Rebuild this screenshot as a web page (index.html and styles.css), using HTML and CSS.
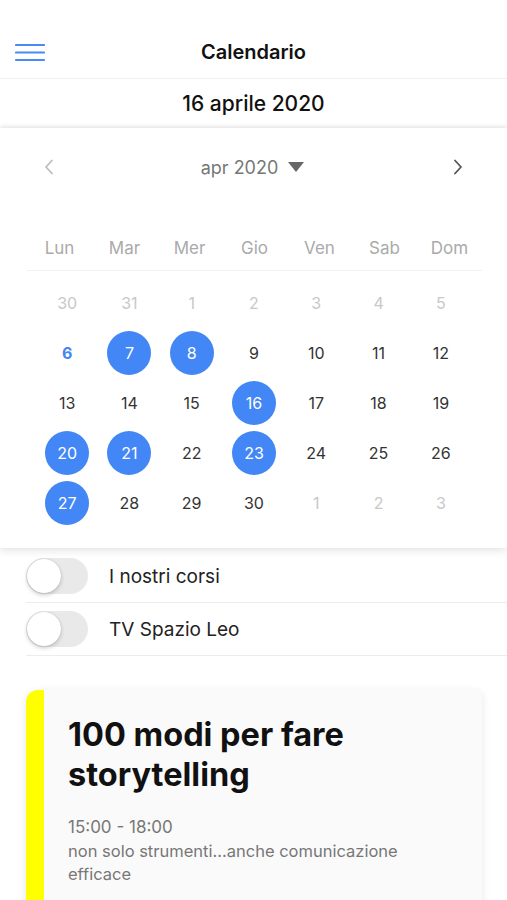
FILE: index.html
```html
<!DOCTYPE html>
<html lang="it">
<head>
  <meta charset="UTF-8" />
  <meta name="viewport" content="width=device-width, initial-scale=1.0"/>
  <title>Calendario</title>
  <link rel="stylesheet" href="styles.css">
</head>
<body>
  <div class="topbar">
    <button class="menu-btn" aria-label="Menu">
      <svg width="30" height="18" viewBox="0 0 30 18">
        <path d="M1 2h28M1 9.5h28M1 17h28" stroke="#4a8af4" stroke-width="2.2" stroke-linecap="round"/>
      </svg>
    </button>
    <div class="title">Calendario</div>
  </div>
  <div class="selected-date">16 aprile 2020</div>

  <div class="calendar">
    <div class="month-nav">
      <span class="arrow prev">
        <svg width="10" height="16" viewBox="0 0 10 16"><path d="M8 1.5L2 8l6 6.5" fill="none" stroke="#bdbdbd" stroke-width="1.8" stroke-linecap="round" stroke-linejoin="round"/></svg>
      </span>
      <span class="month">apr 2020 <span class="caret"></span></span>
      <span class="arrow next">
        <svg width="10" height="16" viewBox="0 0 10 16"><path d="M2 1.5L8 8l-6 6.5" fill="none" stroke="#555" stroke-width="1.8" stroke-linecap="round" stroke-linejoin="round"/></svg>
      </span>
    </div>
    <div class="weekdays">
      <span>Lun</span><span>Mar</span><span>Mer</span><span>Gio</span><span>Ven</span><span>Sab</span><span>Dom</span>
    </div>
    <div class="days" id="days"></div>
  </div>

  <div class="filters">
    <div class="filter-row">
      <span class="switch"><span class="knob"></span></span>
      <span class="filter-label">I nostri corsi</span>
    </div>
    <div class="filter-row">
      <span class="switch"><span class="knob"></span></span>
      <span class="filter-label">TV Spazio Leo</span>
    </div>
  </div>

  <div class="event-card">
    <div class="event-bar"></div>
    <div class="event-body">
      <h2>100 modi per fare storytelling</h2>
      <div class="event-time">15:00 - 18:00</div>
      <div class="event-desc">non solo strumenti...anche comunicazione efficace</div>
    </div>
  </div>

  <script>
    const days = document.getElementById('days');
    const cells = [
      [30, 'other'], [31, 'other'], [1, 'other'], [2, 'other'], [3, 'other'], [4, 'other'], [5, 'other'],
      [6, 'today'], [7, 'marked'], [8, 'marked'], [9], [10], [11], [12],
      [13], [14], [15], [16, 'marked'], [17], [18], [19],
      [20, 'marked'], [21, 'marked'], [22], [23, 'marked'], [24], [25], [26],
      [27, 'marked'], [28], [29], [30], [1, 'other'], [2, 'other'], [3, 'other']
    ];

    cells.forEach(([num, kind]) => {
      const cell = document.createElement('div');
      cell.className = 'day' + (kind ? ' ' + kind : '');
      const label = document.createElement('span');
      label.textContent = num;
      cell.appendChild(label);
      days.appendChild(cell);
    });
  </script>
</body>
</html>
```

FILE: styles.css
```css
body {
  margin: 0;
  font-family: Inter, 'Noto Sans', sans-serif;
  background: #fff;
  color: #222;
  overflow: hidden;
}
.topbar {
  position: relative;
  height: 52px;
  padding-top: 26px;
  display: flex;
  align-items: center;
  justify-content: center;
  border-bottom: 1px solid #f0f0f0;
}
.menu-btn {
  position: absolute;
  left: 15px;
  top: 43px;
  padding: 0;
  border: none;
  background: none;
  line-height: 0;
}
.title {
  font-size: 20px;
  font-weight: 600;
  color: #111;
}
.selected-date {
  height: 49px;
  display: flex;
  align-items: center;
  justify-content: center;
  font-size: 21px;
  font-weight: 500;
  color: #111;
}
.calendar {
  height: 420px;
  box-shadow: 0 -2px 4px rgba(0, 0, 0, 0.08), 0 3px 8px rgba(0, 0, 0, 0.1);
  position: relative;
  z-index: 1;
  background: #fff;
}
.month-nav {
  height: 78px;
  padding: 0 44px;
  display: flex;
  align-items: center;
  justify-content: space-between;
}
.arrow {
  display: flex;
  line-height: 0;
}
.month {
  display: flex;
  align-items: center;
  gap: 10px;
  font-size: 18px;
  color: #777;
  margin-left: -2px;
}
.caret {
  width: 0;
  height: 0;
  border-left: 8px solid transparent;
  border-right: 8px solid transparent;
  border-top: 10px solid #666;
}
.weekdays {
  margin: 0 25px 0 27px;
  padding: 24px 0 0;
  height: 40px;
  display: grid;
  grid-template-columns: repeat(7, 1fr);
  border-bottom: 1px solid #f1f1f1;
  font-size: 17px;
  color: #aaa;
  text-align: center;
  align-items: start;
  line-height: 36px;
}
.days {
  margin: 7px 35px 0 36px;
  display: grid;
  grid-template-columns: repeat(7, 1fr);
  grid-auto-rows: 50px;
}
.day {
  display: flex;
  align-items: center;
  justify-content: center;
  font-size: 16px;
  color: #333;
}
.day span {
  width: 44px;
  height: 44px;
  border-radius: 50%;
  display: flex;
  align-items: center;
  justify-content: center;
}
.day.other { color: #c8c8c8; }
.day.today { color: #4285f4; font-weight: 700; }
.day.marked span {
  background: #4287f5;
  color: #fff;
}
.filters {
  padding-left: 26px;
  margin-top: 2px;
}
.filter-row {
  height: 52px;
  display: flex;
  align-items: center;
  border-bottom: 1px solid #ececec;
}
.switch {
  width: 62px;
  height: 36px;
  border-radius: 18px;
  background: #e9e9ea;
  position: relative;
}
.knob {
  position: absolute;
  top: 1px;
  left: 1px;
  width: 34px;
  height: 34px;
  border-radius: 50%;
  background: #fff;
  box-shadow: 0 2px 4px rgba(0, 0, 0, 0.2), 0 0 1px rgba(0, 0, 0, 0.2);
}
.filter-label {
  margin-left: 21px;
  font-size: 19px;
  color: #222;
}
.event-card {
  margin: 34px 25px 0 26px;
  display: flex;
  background: #fafafa;
  border-radius: 12px 6px 0 0;
  box-shadow: 0 2px 8px rgba(0, 0, 0, 0.1);
  overflow: hidden;
  height: 260px;
}
.event-bar {
  width: 18px;
  background: #ffff00;
  flex-shrink: 0;
}
.event-body {
  padding: 25px 24px 0 24px;
}
.event-body h2 {
  margin: 0 0 19px;
  font-size: 32.5px;
  line-height: 40px;
  font-weight: 700;
  color: #111;
  max-width: 320px;
}
.event-time {
  font-size: 17px;
  color: #777;
  line-height: 26px;
}
.event-desc {
  font-size: 16.5px;
  color: #777;
  line-height: 23px;
  max-width: 350px;
}
```
